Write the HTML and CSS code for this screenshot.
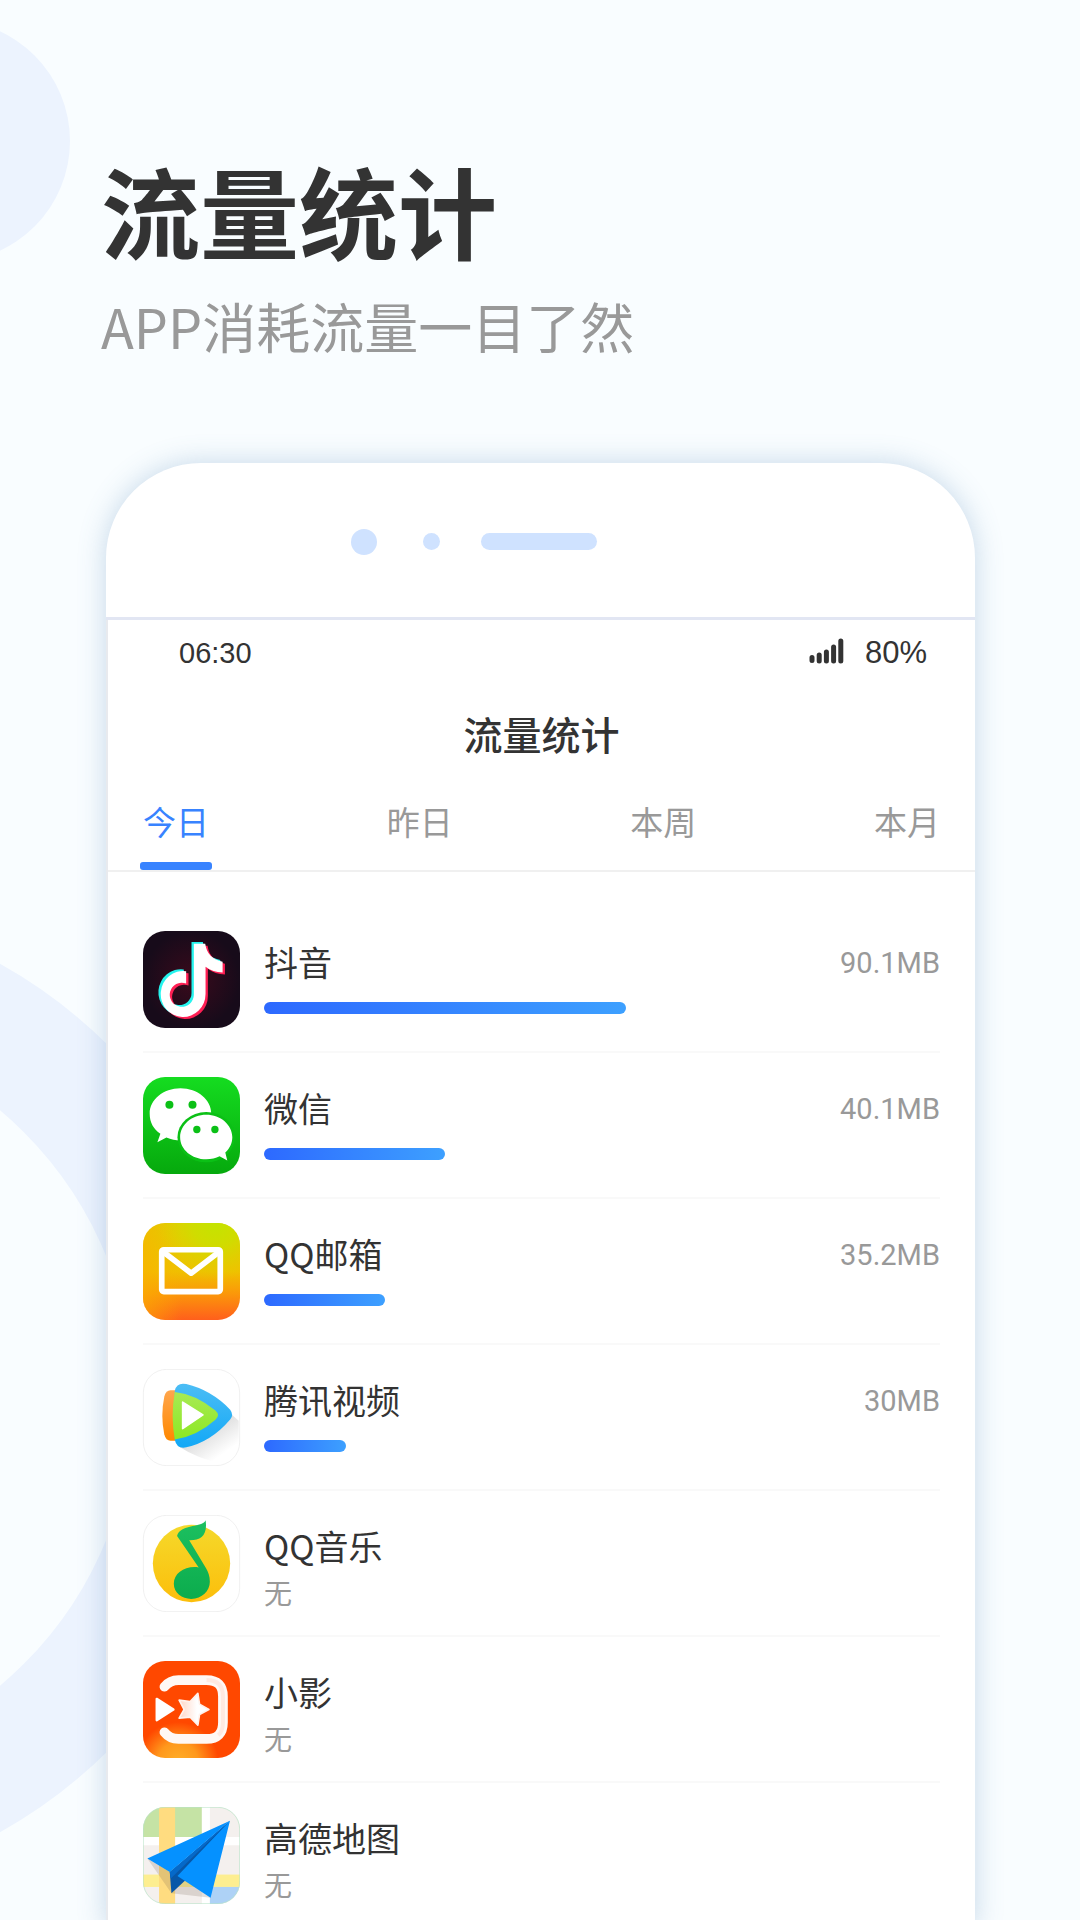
FILE: index.html
```html
<!DOCTYPE html>
<html lang="zh-CN">
<head>
<meta charset="UTF-8" />
<meta name="viewport" content="width=device-width, initial-scale=1.0"/>
<title>流量统计</title>
<link rel="stylesheet" href="styles.css">
</head>
<body>
<div class="page">
  <div class="circle"></div>
  <div class="ring"></div>

  <header class="intro">
    <h1>流量统计</h1>
    <p>APP消耗流量一目了然</p>
  </header>

  <main class="phone">
    <div class="phone-top">
      <span class="camera"></span>
      <span class="sensor"></span>
      <span class="speaker"></span>
    </div>

    <div class="screen">
      <div class="status-bar">
        <span class="time">06:30</span>
        <span class="battery">
          <svg class="signal" viewBox="0 0 36 28" aria-hidden="true">
            <g stroke="#333" stroke-width="5" stroke-linecap="round">
              <path d="M3 20.500V23.500M10.200 18V24M17.400 15V24M24.600 10V24M31.800 4V24"/>
            </g>
          </svg>
          80%
        </span>
      </div>

      <h2>流量统计</h2>

      <nav class="tabs">
        <button type="button" class="tab active">今日</button>
        <button type="button" class="tab">昨日</button>
        <button type="button" class="tab">本周</button>
        <button type="button" class="tab">本月</button>
      </nav>

      <ul class="app-list">
        <li class="app">
          <svg class="icon" viewBox="0 0 290 290" aria-hidden="true">
            <defs>
              <radialGradient id="dyBg"><stop offset="0" stop-color="#3a0a1c"/><stop offset="1" stop-color="#170b1a"/></radialGradient>
              <path id="note" d="M152 38H186C190 68 208 86 238 92V124C218 124 202 118 187 107V188A67 69 0 1 1 129 120V157A36 36 0 1 0 152 190Z"/>
            </defs>
            <rect width="290" height="290" rx="66" fill="url(#dyBg)"/>
            <use href="#note" x="-7" y="-5" fill="#25f4ee"/>
            <use href="#note" x="7" y="6" fill="#fe1f54"/>
            <use href="#note" fill="#fff"/>
          </svg>
          <div class="info">
            <h3>抖音</h3>
            <div class="bar" style="width: 53.5%"></div>
          </div>
          <span class="amount">90.1MB</span>
        </li>

        <li class="app">
          <svg class="icon" viewBox="0 0 290 290" aria-hidden="true">
            <defs>
              <linearGradient id="wxBg" x2="0" y2="1"><stop offset="0" stop-color="#15dc20"/><stop offset="1" stop-color="#06a90d"/></linearGradient>
            </defs>
            <rect width="290" height="290" rx="66" fill="url(#wxBg)"/>
            <path d="M112 34C61 34 20 68 20 110C20 136 32 157 52 170L43 195L70 181C84 187 98 190 112 190C163 188 204 152 204 110C204 68 163 34 112 34Z" fill="#fff"/>
            <ellipse cx="189" cy="180" rx="86" ry="75" fill="#0bc016"/>
            <path d="M189 113C146 113 111 143 111 180C111 217 146 246 189 246C204 246 218 243 229 237L252 250L246 226C260 213 267 197 267 180C267 143 232 113 189 113Z" fill="#fff"/>
            <g fill="#0bc016">
              <circle cx="79" cy="83" r="12"/><circle cx="148" cy="83" r="12"/>
              <circle cx="161" cy="157" r="11"/><circle cx="215" cy="157" r="11"/>
            </g>
          </svg>
          <div class="info">
            <h3>微信</h3>
            <div class="bar" style="width: 26.8%"></div>
          </div>
          <span class="amount">40.1MB</span>
        </li>

        <li class="app">
          <svg class="icon" viewBox="0 0 290 290" aria-hidden="true">
            <defs>
              <linearGradient id="mailBg" x2="0" y2="1"><stop offset="0" stop-color="#e0d000"/><stop offset=".5" stop-color="#f0c000"/><stop offset=".72" stop-color="#fb9909"/><stop offset="1" stop-color="#ff5f1c"/></linearGradient>
              <radialGradient id="mailTop" cx=".75" cy="0" r=".6"><stop offset="0" stop-color="#c4e400"/><stop offset=".4" stop-color="#cbe000" stop-opacity=".8"/><stop offset="1" stop-color="#e0d000" stop-opacity="0"/></radialGradient>
              <linearGradient id="mailLeft"><stop offset="0" stop-color="#fbb000" stop-opacity=".6"/><stop offset=".4" stop-color="#fbb000" stop-opacity="0"/></linearGradient>
            </defs>
            <rect width="290" height="290" rx="66" fill="url(#mailBg)"/>
            <rect width="290" height="290" rx="66" fill="url(#mailLeft)"/>
            <rect width="290" height="290" rx="66" fill="url(#mailTop)"/>
            <g fill="none" stroke="#fff" stroke-width="17" stroke-linejoin="round">
              <rect x="56" y="80" width="175" height="125" rx="6"/>
              <path d="M60 86L144 150L228 86"/>
            </g>
          </svg>
          <div class="info">
            <h3>QQ邮箱</h3>
            <div class="bar" style="width: 17.9%"></div>
          </div>
          <span class="amount">35.2MB</span>
        </li>

        <li class="app">
          <svg class="icon bordered" viewBox="0 0 296 296" aria-hidden="true">
            <defs>
              <linearGradient id="txOrange" x2="0" y2="1"><stop offset="0" stop-color="#ffa64d"/><stop offset="1" stop-color="#ff8800"/></linearGradient>
              <linearGradient id="txBlue" x2="0" y2="1"><stop offset="0" stop-color="#4cbdf5"/><stop offset="1" stop-color="#12a8f6"/></linearGradient>
              <linearGradient id="txGreen" x2="0" y2="1"><stop offset="0" stop-color="#a8ea54"/><stop offset="1" stop-color="#8de824"/></linearGradient>
              <linearGradient id="txShade" gradientUnits="userSpaceOnUse" x1="190" y1="190" x2="240" y2="262"><stop offset="0" stop-color="#bbb"/><stop offset="1" stop-color="#fff"/></linearGradient>
            </defs>
            <rect x="1" y="1" width="294" height="294" rx="72" fill="#fff" stroke="#f0f0f0" stroke-width="3"/>
            <path d="M272 140L292 158V225Q286 275 240 288Q170 276 108 236Z" fill="url(#txShade)" opacity=".5"/>
            <path d="M84 65H100V219H84Q70 219 65 200Q53 142 65 84Q70 65 84 65Z" fill="url(#txOrange)"/>
            <path d="M97 66Q103 40 132 46Q208 64 266 124Q278 140 266 154Q208 222 132 239Q103 245 97 216Z" fill="url(#txBlue)"/>
            <path d="M97 70Q162 77 221 127Q237 141 221 155Q162 207 97 215Q84 142 97 70Z" fill="url(#txGreen)"/>
            <path d="M121 101L183 140L121 182Z" fill="#fff" stroke="#fff" stroke-width="5" stroke-linejoin="round"/>
          </svg>
          <div class="info">
            <h3>腾讯视频</h3>
            <div class="bar" style="width: 12.1%"></div>
          </div>
          <span class="amount">30MB</span>
        </li>

        <li class="app">
          <svg class="icon bordered" viewBox="0 0 296 296" aria-hidden="true">
            <defs>
              <linearGradient id="qmYellow" x2="0" y2="1"><stop offset="0" stop-color="#f5d92b"/><stop offset="1" stop-color="#fcbe0b"/></linearGradient>
              <linearGradient id="qmGreen" x2="0" y2="1"><stop offset="0" stop-color="#1cc060"/><stop offset="1" stop-color="#0cac4d"/></linearGradient>
            </defs>
            <rect x="1" y="1" width="294" height="294" rx="72" fill="#fff" stroke="#f0f0f0" stroke-width="3"/>
            <circle cx="148" cy="148" r="118" fill="url(#qmYellow)"/>
            <path d="M191 16C182 40 114 26 104 64L170 160C130 154 94 176 94 210C94 238 119 256 147 256C180 256 204 232 204 204C204 186 199 174 192 162L141 77C176 78 198 62 191 16Z" fill="url(#qmGreen)"/>
          </svg>
          <div class="info">
            <h3>QQ音乐</h3>
            <p class="none">无</p>
          </div>
        </li>

        <li class="app">
          <svg class="icon" viewBox="0 0 290 290" aria-hidden="true">
            <defs>
              <radialGradient id="xyGlow" cx=".36" cy="1.05" r=".42"><stop offset="0" stop-color="#ffb02a"/><stop offset=".5" stop-color="#ff981c"/><stop offset="1" stop-color="#ff4800"/></radialGradient>
              <linearGradient id="xyStar"><stop offset="0" stop-color="#ffd5c4"/><stop offset=".6" stop-color="#fff"/></linearGradient>
            </defs>
            <rect width="290" height="290" rx="66" fill="url(#xyGlow)"/>
            <path d="M64 77Q80 57 106 57H190Q239 57 239 106V184Q239 233 190 233H106Q80 233 64 213" fill="none" stroke="#fff8f5" stroke-width="29" stroke-linecap="round"/>
            <path d="M190 57Q239 57 239 106V184Q239 210 225 222" fill="none" stroke="#ffdfd3" stroke-width="12" opacity=".6"/>
            <path d="M41 113L91 145L41 177Z" fill="#fff" stroke="#fff" stroke-width="7" stroke-linejoin="round"/>
            <path d="M164 97L169 129L197 145L169 160L164 192L141 168L108 171L123 145L108 117L141 121Z" fill="url(#xyStar)" stroke="#fff2ec" stroke-width="5" stroke-linejoin="round"/>
          </svg>
          <div class="info">
            <h3>小影</h3>
            <p class="none">无</p>
          </div>
        </li>

        <li class="app">
          <svg class="icon" viewBox="0 0 290 290" aria-hidden="true">
            <defs><clipPath id="gdClip"><rect width="290" height="290" rx="66"/></clipPath></defs>
            <g clip-path="url(#gdClip)">
              <rect width="290" height="290" fill="#f4f0ee"/>
              <rect width="176" height="90" fill="#c5e3a5"/>
              <path d="M0 90H290V114H0ZM176 0H200V290H176Z" fill="#fff"/>
              <rect y="202" width="290" height="37" fill="#fdee90"/>
              <rect x="200" y="239" width="90" height="51" fill="#aed2f6"/>
              <rect x="48" width="48" height="290" fill="#ffdc80"/>
              <path d="M13 154L85 258L202 271L150 220L80 194Z" fill="#756050" opacity=".2"/>
            </g>
            <rect x="1" y="1" width="288" height="288" rx="65" fill="none" stroke="#b9e4c8" stroke-width="2"/>
            <path d="M260 41L80 194L85 258L130 216Z" fill="#0757a8"/>
            <path d="M260 41L80 194L83 214Z" fill="#0569c9"/>
            <path d="M260 41L13 154L80 194ZM260 41L103 206L202 271Z" fill="#0591ff"/>
          </svg>
          <div class="info">
            <h3>高德地图</h3>
            <p class="none">无</p>
          </div>
        </li>
      </ul>
    </div>
  </main>
</div>
</body>
</html>
```
FILE: styles.css
```css
* {
  box-sizing: border-box;
}
body {
  margin: 0;
  font-family: "Noto Sans CJK SC", sans-serif;
  color: #333;
  background-color: #f9fdff;
}
h1, h2, h3, p, ul {
  margin: 0;
  padding: 0;
}
.page {
  position: relative;
  height: 100vh;
  overflow: hidden;
}

/* background shapes */
.circle,
.ring {
  position: absolute;
  border-radius: 50%;
}
.circle {
  left: -172px;
  top: 20px;
  width: 242px;
  height: 242px;
  background-color: #ecf3fe;
}
.ring {
  left: -739px;
  top: 901px;
  width: 994px;
  height: 994px;
  border: 121px solid #ecf3fe;
}

.intro {
  position: relative;
  padding: 145px 101px 0;
}
.intro h1 {
  font-size: 99px;
  line-height: 128px;
  font-weight: 700;
}
.intro p {
  margin-top: 13px;
  font-size: 54px;
  line-height: 80px;
  color: #999;
}

.phone {
  position: relative;
  margin: 97px 105px 0 106px;
  background-color: #fff;
  border-radius: 95px 95px 0 0;
  box-shadow: 0 0 28px rgba(80, 130, 180, 0.3);
}
.phone-top {
  display: flex;
  align-items: center;
  height: 157px;
  padding: 3px 0 0 245px;
  border-bottom: 3px solid #e2e6f3;
}
.phone-top span {
  background-color: #cfe2ff;
  border-radius: 14px;
}
.camera {
  width: 26px;
  height: 26px;
}
.sensor {
  width: 17px;
  height: 17px;
  margin: 0 41px 0 46px;
}
.speaker {
  width: 116px;
  height: 17px;
}

.screen {
  border-left: 2px solid #e8eaee;
}
.status-bar {
  display: flex;
  justify-content: space-between;
  align-items: center;
  height: 66px;
  padding: 0 48px 0 71px;
  font-family: "Liberation Sans", Arial, sans-serif;
}
.time {
  font-size: 29px;
}
.battery {
  display: flex;
  gap: 20px;
  font-size: 31px;
}
.signal {
  width: 36px;
  height: 28px;
  margin-top: 2px;
}
.screen h2 {
  font-size: 39px;
  line-height: 60px;
  font-weight: 500;
  text-align: center;
  margin-top: 17px;
}

.tabs {
  display: flex;
  justify-content: space-between;
  height: 109px;
  padding: 0 32px;
  border-bottom: 2px solid #f0f0f0;
}
.tab {
  padding: 8px 3px 0;
  border: 0;
  background: none;
  font-family: inherit;
  font-size: 33px;
  color: #999;
  cursor: pointer;
}
.tab.active {
  position: relative;
  color: #3883ff;
}
.tab.active::after {
  content: "";
  position: absolute;
  left: 0;
  right: 0;
  bottom: 0;
  height: 8px;
  border-radius: 3px;
  background-color: #3883ff;
}

.app-list {
  list-style: none;
  padding: 35px 35px 0;
}
.app {
  position: relative;
  display: flex;
  gap: 24px;
  height: 146px;
  padding-top: 24px;
  border-bottom: 2px solid #f9f9f9;
}
.icon {
  width: 97px;
  height: 97px;
}
.bordered {
  width: 99px;
  margin: 0 -1px;
}
.info {
  flex: 1;
}
.info h3 {
  font-size: 34px;
  line-height: 48px;
  font-weight: 400;
  margin-top: 7px;
}
.bar {
  height: 12px;
  margin-top: 16px;
  border-radius: 6px;
  background: linear-gradient(to right, #2d69ff, #3da0ff);
}
.none {
  font-size: 28px;
  line-height: 44px;
  color: #999;
}
.amount {
  position: absolute;
  right: 0;
  font-family: Roboto, sans-serif;
  font-size: 29px;
  line-height: 64px;
  color: #999;
}
```
